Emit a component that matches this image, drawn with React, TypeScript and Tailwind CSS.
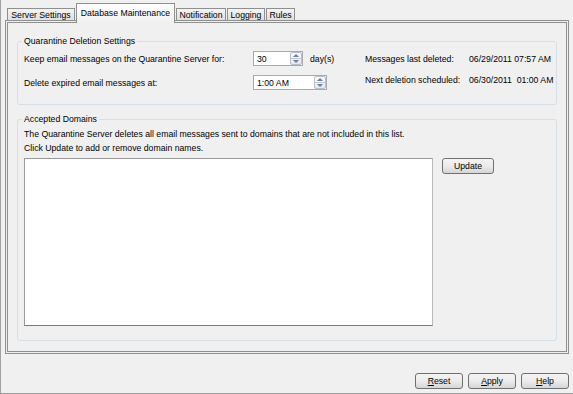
import { ReactNode } from "react";

const tabs = [
  { label: "Server Settings", w: "w-[68px]" },
  { label: "Database Maintenance", w: "w-[99px]", active: true },
  { label: "Notification", w: "w-[50px]" },
  { label: "Logging", w: "w-[38px]" },
  { label: "Rules", w: "w-[29px]" },
];

function SpinArrows() {
  return (
    <div className="flex flex-col w-[12px] h-full border border-[#b8c0cb] rounded-[2px] bg-gradient-to-b from-[#fafbfc] to-[#e3e7ec]">
      <div className="flex-1 flex items-center justify-center border-b border-[#c8ced6]">
        <svg width="6" height="3" viewBox="0 0 6 3">
          <path d="M0 3 L3 0 L6 3 Z" fill="#6b80a3" />
        </svg>
      </div>
      <div className="flex-1 flex items-center justify-center">
        <svg width="6" height="3" viewBox="0 0 6 3">
          <path d="M0 0 L3 3 L6 0 Z" fill="#6b80a3" />
        </svg>
      </div>
    </div>
  );
}

function Spinner({ value, width }: { value: string; width: string }) {
  return (
    <div className={`flex items-stretch h-[15px] bg-white border border-[#a6abb3] ${width}`}>
      <div className="flex-1 flex items-center pl-[3px]">{value}</div>
      <SpinArrows />
    </div>
  );
}

function Button({ children, className }: { children: ReactNode; className: string }) {
  return (
    <button
      className={`flex items-center justify-center border border-[#707070] rounded-[3px] bg-gradient-to-b from-[#f4f4f4] via-[#ebebeb] to-[#d6d6d6] ${className}`}
    >
      {children}
    </button>
  );
}

function Mnemonic({ first, rest }: { first: string; rest: string }) {
  return (
    <span>
      <span className="underline">{first}</span>
      {rest}
    </span>
  );
}

export default function App() {
  return (
    <div className="w-[573px] h-[394px] bg-[#f0f0f0] border-l border-b border-[#a0a0a0] font-['Liberation_Sans',Arial,sans-serif] text-[8.7px] leading-[10px] text-black">
      {/* tab strip */}
      <div className="flex items-end gap-px h-[20px] pl-[6px]">
        {tabs.map((t) =>
          t.active ? (
            <div
              key={t.label}
              className={`relative z-10 h-[20px] mb-[-3px] flex justify-center pt-[4px] border-t border-l border-r border-[#8e8f8f] bg-gradient-to-b from-white to-[#f0f0f0] ${t.w}`}
            >
              {t.label}
            </div>
          ) : (
            <div
              key={t.label}
              className={`h-[12px] flex items-center justify-center pt-[1px] border-t border-l border-r border-[#8e8f8f] bg-gradient-to-b from-[#f4f4f4] to-[#e0e0e0] ${t.w}`}
            >
              {t.label}
            </div>
          )
        )}
      </div>

      {/* tab panel */}
      <div className="ml-[4px] w-[564px] h-[334px] border-[3px] border-double border-[#8e8f8f]">
        <fieldset className="mt-[13px] ml-[9px] w-[540px] h-[69px] border border-[#d5dfe5] rounded-[3px]">
          <legend className="ml-[4px] px-[2px] leading-[10px]">Quarantine Deletion Settings</legend>
          <div className="pl-[6px] pt-[5px]">
            <div className="flex items-center h-[15px]">
              <div className="w-[229px]">Keep email messages on the Quarantine Server for:</div>
              <Spinner value="30" width="w-[50px]" />
              <div className="ml-[7px] w-[55px]">day(s)</div>
              <div className="w-[104px]">Messages last deleted:</div>
              <div>06/29/2011 07:57 AM</div>
            </div>
            <div className="flex items-center h-[15px] mt-[9px]">
              <div className="w-[229px] pt-[1px]">Delete expired email messages at:</div>
              <Spinner value="1:00 AM" width="w-[74px]" />
              <div className="flex self-start ml-[38px]">
                <div className="w-[104px]">Next deletion scheduled:</div>
                <div>06/30/2011&nbsp; 01:00 AM</div>
              </div>
            </div>
          </div>
        </fieldset>

        <fieldset className="mt-[9px] ml-[9px] w-[540px] h-[227px] border border-[#d5dfe5] rounded-[3px]">
          <legend className="ml-[4px] px-[2px] leading-[10px]">Accepted Domains</legend>
          <div className="pl-[6px] pt-[3px]">
            <p className="leading-[14px]">
              The Quarantine Server deletes all email messages sent to domains that are not included in this list.
            </p>
            <p className="leading-[14px]">Click Update to add or remove domain names.</p>
            <div className="flex items-start mt-[3px]">
              <div className="w-[409px] h-[168px] bg-white border border-t-[#9a9a9a] border-l-[#9a9a9a] border-r-[#b9b9b9] border-b-[#7a7a7a]" />
              <Button className="ml-[9px] w-[52px] h-[16px]">Update</Button>
            </div>
          </div>
        </fieldset>
      </div>

      {/* dialog buttons */}
      <div className="flex justify-end gap-[5px] mt-[19px] pr-[4px]">
        <Button className="w-[48px] h-[16px]">
          <Mnemonic first="R" rest="eset" />
        </Button>
        <Button className="w-[48px] h-[16px]">
          <Mnemonic first="A" rest="pply" />
        </Button>
        <Button className="w-[48px] h-[16px]">
          <Mnemonic first="H" rest="elp" />
        </Button>
      </div>
    </div>
  );
}
